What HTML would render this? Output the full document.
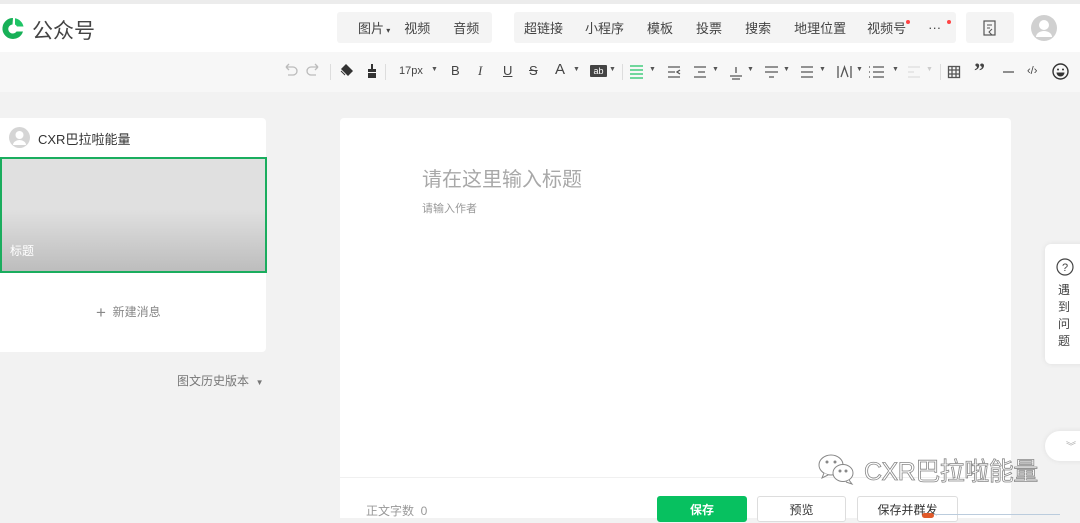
<!DOCTYPE html>
<html><head><meta charset="utf-8"><style>
*{margin:0;padding:0;box-sizing:border-box}
body{width:1080px;height:518px;overflow:hidden;background:#f2f2f2;font-family:"Liberation Sans","Noto Sans CJK SC",sans-serif;position:relative;color:#333}
.abs{position:absolute}
.hdr{left:0;top:4px;width:1080px;height:48px;background:#fff}
.top{left:0;top:0;width:1080px;height:4px;background:#ececec}
.pill{background:#f4f4f4;top:12px;height:31px;border-radius:3px;font-size:13px;color:#444;display:flex;align-items:center}
.tb{left:0;top:52px;width:1080px;height:40px;background:#f7f7f7}
.ic{position:absolute;top:63px;font-size:13px;color:#444}
.card{background:#fff;border-radius:4px}
.dot{position:absolute;width:4px;height:4px;border-radius:2px;background:#f44}
.btn{position:absolute;top:496px;height:26px;border:1px solid #ddd;border-radius:3px;background:#fff;font-size:12px;text-align:center;line-height:26px;color:#333}
.dd{position:absolute;top:66px;font-size:7px;color:#555}
</style></head><body>
<div class="abs top"></div>
<div class="abs hdr"></div>
<svg class="abs" style="left:0;top:15px" width="26" height="28" viewBox="0 0 26 28"><path d="M13 3a10.5 10.5 0 1 0 10 13.5h-6.5a4.5 4.5 0 1 1-4-7z" fill="#17b057"/><path d="M15 3.3a10.5 10.5 0 0 1 8.5 8.2h-6.5a4.5 4.5 0 0 0-2-2z" fill="#1fc466"/></svg>
<div class="abs" style="left:32px;top:15px;font-size:21px;color:#444">公众号</div>
<div class="abs pill" style="left:337px;width:155px"><span style="margin-left:21px">图片<small style="font-size:8px"> ▾</small></span><span style="margin-left:14px">视频</span><span style="margin-left:23px">音频</span></div>
<div class="abs pill" style="left:514px;width:442px"><span style="margin-left:10px">超链接</span><span style="margin-left:22px">小程序</span><span style="margin-left:23px">模板</span><span style="margin-left:23px">投票</span><span style="margin-left:23px">搜索</span><span style="margin-left:23px">地理位置</span><span style="margin-left:21px">视频号</span><span style="margin-left:22px">···</span></div>
<div class="dot" style="left:906px;top:20px"></div><div class="dot" style="left:947px;top:20px"></div>
<div class="abs pill" style="left:966px;width:48px;justify-content:center"><svg width="14" height="16"><rect x="1" y="1" width="11" height="14" fill="none" stroke="#555" stroke-width="1.2"/><path d="M4 5h5M4 8h3M9 9l-3 3 3 3" stroke="#555" fill="none"/></svg></div>
<svg class="abs" style="left:1031px;top:15px" width="26" height="26"><circle cx="13" cy="13" r="13" fill="#d0d0d0"/><circle cx="13" cy="10" r="5" fill="#fff"/><path d="M5 22a8 6 0 0 1 16 0z" fill="#fff"/></svg>
<div class="abs tb"></div>
<svg class="abs" style="left:282px;top:63px" width="40" height="16" fill="none" stroke="#bbb" stroke-width="1.3"><path d="M4 4h7a4 4 0 0 1 0 8H6M4 4l3-3M4 4l3 3"/><path d="M36 4h-7a4 4 0 0 0 0 8h5M36 4l-3-3M36 4l-3 3"/></svg>
<div class="abs" style="left:330px;top:64px;width:1px;height:16px;background:#ddd"></div>
<svg class="abs" style="left:338px;top:63px" width="44" height="16"><path d="M8 1l7 7-5 5-7-7z" fill="#333"/><path d="M3 8l4 4" stroke="#333"/><path d="M33 1h2v5h3v3h-8v-3h3zM30 10h8v5h-8z" fill="#333"/></svg>
<div class="abs" style="left:385px;top:64px;width:1px;height:16px;background:#ddd"></div>
<div class="ic" style="left:399px;font-size:11px;top:65px">17px</div><div class="dd" style="left:431px">▼</div>
<div class="ic" style="left:451px">B</div><div class="ic" style="left:478px;font-family:'Liberation Serif'"><i>I</i></div><div class="ic" style="left:503px"><u>U</u></div><div class="ic" style="left:529px"><s>S</s></div><div class="ic" style="left:555px;font-size:15px;top:61px">A</div><div class="dd" style="left:573px">▼</div>
<div class="abs" style="left:590px;top:65px;width:17px;height:12px;background:#444;color:#fff;font-size:9px;text-align:center;line-height:12px;border-radius:1px">ab</div><div class="dd" style="left:609px">▼</div>
<div class="abs" style="left:622px;top:64px;width:1px;height:16px;background:#ddd"></div>
<svg class="abs" style="left:628px;top:64px" width="410" height="16" stroke="#555" stroke-width="1.3" fill="none">
<path d="M2 2h13M2 6h13M2 10h13M2 14h13" stroke="#1fc466"/>
<path d="M40 3h12M40 8h7M40 13h12M52 6l-3 2 3 2"/>
<path d="M66 3h12M70 8h7M66 13h12"/>
<path d="M102 12h12M104 15h8M108 3v6"/>
<path d="M137 3h13M137 8h13M141 13h5"/>
<path d="M173 3h12M173 8h12M173 13h12"/>
<path d="M210 2v12M223 2v12M213 13l3.5-10 3.5 10"/>
<path d="M245 3h11M245 8h11M245 13h11M241 3h1M241 8h1M241 13h1"/>
<path d="M280 3h12M280 8h6M280 13h12" stroke="#ddd"/>
<rect x="320.5" y="2.5" width="11" height="11"/><path d="M320 6h12M320 10h12M324 2v12M328 2v12"/>
<path d="M375 8h11"/>
</svg>
<div class="dd" style="left:649px">▼</div><div class="dd" style="left:712px">▼</div><div class="dd" style="left:747px">▼</div><div class="dd" style="left:783px">▼</div><div class="dd" style="left:819px">▼</div><div class="dd" style="left:856px">▼</div><div class="dd" style="left:892px">▼</div><div class="dd" style="left:926px;color:#ccc">▼</div>
<div class="abs" style="left:940px;top:64px;width:1px;height:16px;background:#ddd"></div>
<div class="ic" style="left:974px;font-weight:bold;font-size:22px;top:58px;font-family:'Liberation Serif'">”</div>
<div class="ic" style="left:1027px;font-size:11px;top:65px">‹/›</div>
<svg class="abs" style="left:1052px;top:63px" width="17" height="17"><circle cx="8.5" cy="8.5" r="7.5" fill="none" stroke="#333" stroke-width="1.4"/><circle cx="6" cy="6.5" r="1" fill="#333"/><circle cx="11" cy="6.5" r="1" fill="#333"/><path d="M4.5 9.5h8a4 4 0 0 1-8 0z" fill="#333"/></svg>

<div class="abs card" style="left:0;top:118px;width:266px;height:234px;border-radius:0 4px 4px 0"></div>
<svg class="abs" style="left:9px;top:127px" width="21" height="21"><circle cx="10.5" cy="10.5" r="10.5" fill="#d5d5d5"/><circle cx="10.5" cy="8" r="4" fill="#fff"/><path d="M4 18a6.5 5 0 0 1 13 0z" fill="#fff"/></svg>
<div class="abs" style="left:38px;top:129px;font-size:13px;color:#333">CXR巴拉啦能量</div>
<div class="abs" style="left:0;top:157px;width:267px;height:116px;border:2px solid #1aad5e;background:linear-gradient(#e0e0e0 0,#e0e0e0 45%,#bdbdbd 100%)"></div>
<div class="abs" style="left:10px;top:242px;font-size:12px;color:#fff">标题</div>
<div class="abs" style="left:96px;top:303px;font-size:12px;color:#888"><span style="font-size:17px;vertical-align:-2px">+</span>&nbsp; 新建消息</div>
<div class="abs" style="left:177px;top:372px;font-size:12px;color:#777">图文历史版本 &nbsp;<span style="font-size:8px">▼</span></div>

<div class="abs card" style="left:340px;top:118px;width:671px;height:400px;border-radius:4px 4px 0 0"></div>
<div class="abs" style="left:340px;top:477px;width:671px;height:1px;background:#f0f0f0"></div>
<div class="abs" style="left:422px;top:163px;font-size:20px;color:#a8a8a8">请在这里输入标题</div>
<div class="abs" style="left:422px;top:200px;font-size:11px;color:#999">请输入作者</div>
<div class="abs" style="left:366px;top:502px;font-size:12px;color:#999">正文字数&nbsp; 0</div>
<div class="btn" style="left:657px;width:90px;background:#07c160;border-color:#07c160;color:#fff;font-weight:bold">保存</div>
<div class="btn" style="left:757px;width:89px">预览</div>
<div class="btn" style="left:857px;width:101px">保存并群发</div>
<div class="abs" style="left:930px;top:514px;width:130px;height:4px;border-top:1px solid #bcd"></div>
<div class="abs" style="left:922px;top:513px;width:12px;height:5px;background:#e05a2a;border-radius:3px"></div>
<svg class="abs" style="left:816px;top:452px" width="44" height="34" fill="#fff" stroke="#888" stroke-width="1"><ellipse cx="15" cy="13" rx="12" ry="10"/><path d="M8 21l-2 5 6-3"/><ellipse cx="27" cy="21" rx="10" ry="8.5"/><path d="M33 28l3 4-6-2"/><circle cx="11" cy="10" r="1" fill="#888"/><circle cx="19" cy="10" r="1" fill="#888"/><circle cx="24" cy="19" r="1" fill="#888"/><circle cx="30" cy="19" r="1" fill="#888"/></svg>
<div class="abs" style="left:864px;top:452px;font-size:25px;color:#fff;-webkit-text-stroke:0.8px #888;letter-spacing:-0.5px">CXR巴拉啦能量</div>

<div class="abs card" style="left:1045px;top:244px;width:40px;height:120px;box-shadow:0 0 6px rgba(0,0,0,.08);border-radius:6px 0 0 6px"></div>
<svg class="abs" style="left:1055px;top:257px" width="20" height="20"><circle cx="10" cy="10" r="8" fill="none" stroke="#444" stroke-width="1.2"/><text x="10" y="14" font-size="11" text-anchor="middle" fill="#444" font-family="Liberation Sans">?</text></svg>
<div class="abs" style="left:1058px;top:282px;width:14px;font-size:12px;line-height:17px;color:#444">遇到问题</div>
<div class="abs card" style="left:1045px;top:431px;width:40px;height:30px;border-radius:15px 0 0 15px;box-shadow:0 0 6px rgba(0,0,0,.08);font-size:10px;color:#aaa;padding:7px 0 0 21px">︾</div>
</body></html>
